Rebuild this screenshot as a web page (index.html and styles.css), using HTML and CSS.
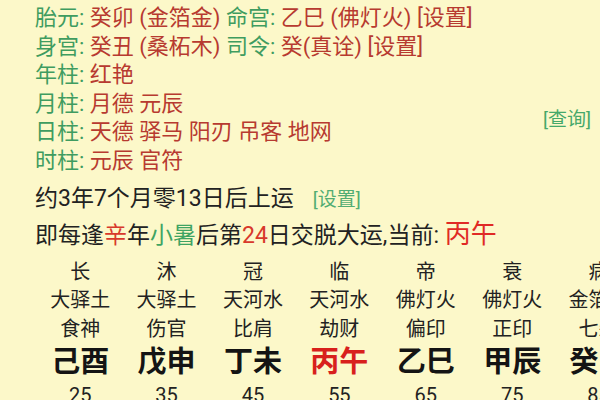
FILE: index.html
```html
<!DOCTYPE html>
<html lang="zh-CN">
<head>
<meta charset="utf-8">
<title>大运</title>
<link rel="stylesheet" href="styles.css">
</head>
<body>
<div class="page">
  <div class="info">
    <p class="line"><span class="k">胎元:</span> <span class="v">癸卯 (金箔金)</span> <span class="k">命宫:</span> <span class="v">乙巳 (佛灯火)</span> <span class="v">[设置]</span></p>
    <p class="line"><span class="k">身宫:</span> <span class="v">癸丑 (桑柘木)</span> <span class="k">司令:</span> <span class="v">癸(真诠)</span> <span class="v">[设置]</span></p>
    <p class="line"><span class="k">年柱:</span> <span class="v">红艳</span></p>
    <p class="line"><span class="k">月柱:</span> <span class="v">月德 元辰</span></p>
    <p class="line"><span class="k">日柱:</span> <span class="v">天德 驿马 阳刃 吊客 地网</span></p>
    <p class="line"><span class="k">时柱:</span> <span class="v">元辰 官符</span></p>
  </div>
  <span class="query">[查询]</span>
  <p class="yun">约3年7个月零13日后上运<span class="set">[设置]</span></p>
  <p class="yun">即每逢<span class="r">辛</span>年<span class="g">小暑</span>后第<span class="r">24</span>日交脱大运,当前: <span class="cur">丙午</span></p>
  <div class="luck">
    <div class="col"><span class="cell">长</span><span class="cell">大驿土</span><span class="cell">食神</span><span class="gz">己酉</span><span class="age">25</span></div>
    <div class="col"><span class="cell">沐</span><span class="cell">大驿土</span><span class="cell">伤官</span><span class="gz">戊申</span><span class="age">35</span></div>
    <div class="col"><span class="cell">冠</span><span class="cell">天河水</span><span class="cell">比肩</span><span class="gz">丁未</span><span class="age">45</span></div>
    <div class="col"><span class="cell">临</span><span class="cell">天河水</span><span class="cell">劫财</span><span class="gz now">丙午</span><span class="age">55</span></div>
    <div class="col"><span class="cell">帝</span><span class="cell">佛灯火</span><span class="cell">偏印</span><span class="gz">乙巳</span><span class="age">65</span></div>
    <div class="col"><span class="cell">衰</span><span class="cell">佛灯火</span><span class="cell">正印</span><span class="gz">甲辰</span><span class="age">75</span></div>
    <div class="col"><span class="cell">病</span><span class="cell">金箔金</span><span class="cell">七杀</span><span class="gz">癸卯</span><span class="age">85</span></div>
    <div class="col"><span class="cell">死</span><span class="cell">金箔金</span><span class="cell">正官</span><span class="gz">壬寅</span><span class="age">95</span></div>
  </div>
</div>
</body>
</html>
```
FILE: styles.css
```css
html, body {
  margin: 0;
  padding: 0;
  background: #fcf8c9;
  overflow: hidden;
}
body {
  font-family: Roboto, "Noto Sans CJK SC", sans-serif;
  color: #222;
  width: 600px;
  height: 400px;
}
.page {
  position: relative;
  padding: 4px 0 0 35px;
  white-space: nowrap;
}
p { margin: 0; }
.line {
  font-size: 22px;
  line-height: 28.6px;
}
.k { color: #3f9c60; }
.v { color: #b73a30; }
.query {
  position: absolute;
  right: 9px;
  top: 106px;
  font-size: 19px;
  line-height: 28px;
  color: #45a86a;
}
.yun {
  font-size: 23px;
  line-height: 35px;
  color: #222;
}
.info { margin-bottom: 5px; }
.set {
  margin-left: 19px;
  font-size: 19px;
  color: #52ad72;
}
.r { color: #d8392b; }
.g { color: #3fa463; }
.cur {
  font-size: 26px;
  color: #e02a25;
}
.luck {
  display: grid;
  grid-auto-flow: column;
  grid-auto-columns: 86.4px;
  margin-left: 2px;
  margin-top: 5px;
}
.col {
  display: flex;
  flex-direction: column;
  align-items: center;
}
.cell {
  font-size: 20px;
  line-height: 28.6px;
  color: #222;
}
.gz {
  font-size: 29px;
  font-weight: 700;
  line-height: 38px;
  color: #141414;
}
.gz.now { color: #d8201c; }
.age {
  font-size: 20px;
  line-height: 28px;
  color: #222;
}
```
